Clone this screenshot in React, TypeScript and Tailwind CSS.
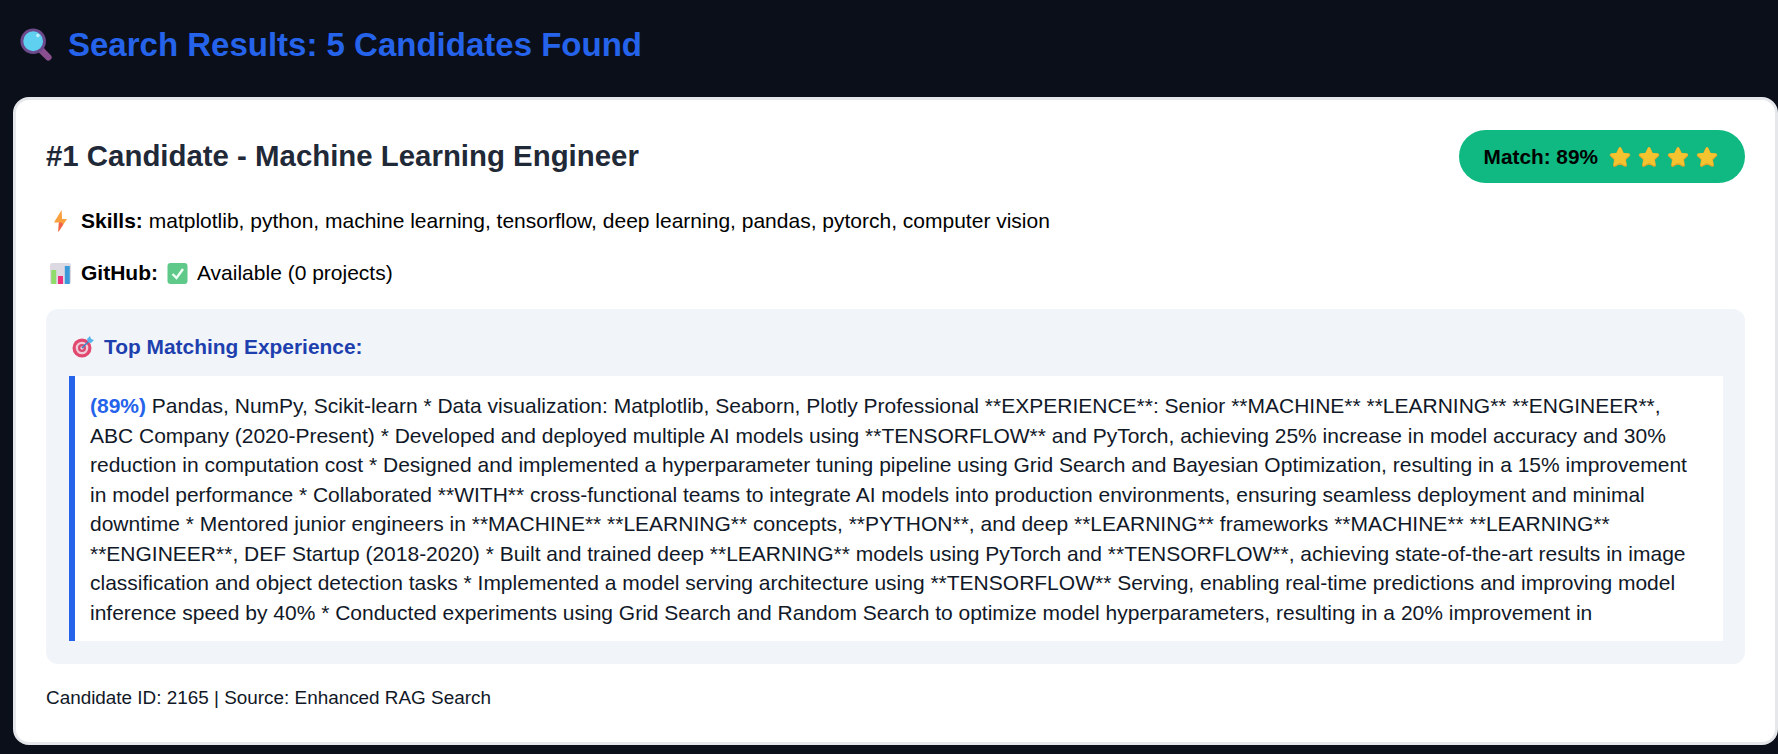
const font = "[font-family:'Liberation_Sans',Arial,sans-serif]";

function MagnifierIcon() {
  return (
    <svg width="34" height="34" viewBox="0 0 36 36" className="shrink-0">
      <path d="M24 24 L31 31" stroke="#8a4f8f" strokeWidth="7" strokeLinecap="round" />
      <circle cx="15" cy="14" r="12" fill="#5fd0f0" stroke="#6d4a8c" strokeWidth="3" />
      <circle cx="20" cy="8" r="1.8" fill="#c5effa" />
    </svg>
  );
}

function BoltIcon() {
  return (
    <svg width="13" height="22" viewBox="1 0 12 22" preserveAspectRatio="none" className="shrink-0">
      <path d="M8 0 L1 12.5 H5.5 L5 22 L13 9 H8.5 Z" fill="#f9a03f" />
      <path d="M5.5 12.5 L5 22 L9.5 14.5 L8 12.5 Z" fill="#f0624d" />
    </svg>
  );
}

function ChartIcon() {
  return (
    <svg width="21" height="21" viewBox="0 0 17 21" preserveAspectRatio="none" className="shrink-0">
      <rect width="17" height="21" rx="2" fill="#dcd9e3" />
      <rect x="1" y="7" width="4" height="14" fill="#8fdc6a" />
      <rect x="6.5" y="13" width="4" height="8" fill="#ee2f7c" />
      <rect x="12" y="3" width="4" height="18" fill="#3a9ad9" />
    </svg>
  );
}

function CheckIcon() {
  return (
    <svg width="21" height="21" viewBox="0 0 20 21" className="shrink-0">
      <rect x="0" y="0" width="20" height="21" rx="3" fill="#5fc98a" />
      <path d="M5 11 L9 15 L15.5 6" fill="none" stroke="#f2fff6" strokeWidth="2.4" />
    </svg>
  );
}

function TargetIcon() {
  return (
    <svg width="22" height="22" viewBox="0 0 22 22" className="shrink-0">
      <circle cx="10" cy="12" r="9.5" fill="#e2476f" />
      <circle cx="10" cy="12" r="6.3" fill="#f0cad6" />
      <circle cx="10" cy="12" r="4" fill="#d94a72" />
      <circle cx="10" cy="12" r="1.7" fill="#f0cad6" />
      <path d="M10 12 L19 3" stroke="#3e82c4" strokeWidth="1.6" />
      <path d="M15 3 L18 0 L19 3 L22 4 L19 7 L16 6 Z" fill="#56b4ea" />
    </svg>
  );
}

function StarIcon() {
  return (
    <svg width="22" height="22" viewBox="0 0 24 24" className="shrink-0">
      <path
        d="M12 3 L14.9 9 L21.5 9.9 L16.7 14.5 L17.9 21 L12 17.9 L6.1 21 L7.3 14.5 L2.5 9.9 L9.1 9 Z"
        fill="#e0a42a"
        stroke="#e0a42a"
        strokeWidth="3.4"
        strokeLinejoin="round"
      />
      <path
        d="M12 3 L14.9 9 L21.5 9.9 L16.7 14.5 L17.9 21 L12 17.9 L6.1 21 L7.3 14.5 L2.5 9.9 L9.1 9 Z"
        fill="#f4c430"
        stroke="#f4c430"
        strokeWidth="2"
        strokeLinejoin="round"
        transform="translate(0 -0.6)"
      />
    </svg>
  );
}

export default function App() {
  return (
    <div className={`${font} min-h-[754px] bg-[#0b0f19] pt-[24px] pb-[8px] pl-[13px] overflow-hidden`}>
      <h2 className="flex items-center gap-[15px] pl-[6px] h-[42px] text-[33px] font-bold leading-[42px] text-[#2563eb]">
        <MagnifierIcon />
        <span>Search Results: 5 Candidates Found</span>
      </h2>

      <div className="mt-[31px] rounded-[16px] border-[3px] border-[#e5e7eb] bg-white px-[30px] pt-[30px] pb-[32px]">
        <div className="flex items-center justify-between h-[53px]">
          <h3 className="text-[29.4px] font-bold text-[#1f2937]">#1 Candidate - Machine Learning Engineer</h3>
          <div className="flex items-center gap-[11px] h-[53px] rounded-full bg-[#10b981] pl-[25px] pr-[27px] text-[20.8px] font-bold text-black">
            <span>Match: 89%</span>
            <span className="flex items-center gap-[7px]">
              <StarIcon />
              <StarIcon />
              <StarIcon />
              <StarIcon />
            </span>
          </div>
        </div>

        <p className="mt-[23px] flex items-center gap-[14px] pl-[8px] h-[30px] text-[21px] text-black">
          <BoltIcon />
          <span>
            <b>Skills:</b> matplotlib, python, machine learning, tensorflow, deep learning, pandas, pytorch, computer vision
          </span>
        </p>

        <p className="mt-[22px] flex items-center pl-[4px] h-[30px] text-[21px] text-black">
          <ChartIcon />
          <b className="ml-[10px]">GitHub:</b>
          <span className="ml-[9px]">
            <CheckIcon />
          </span>
          <span className="ml-[9px]">Available (0 projects)</span>
        </p>

        <div className="mt-[21px] rounded-[12px] bg-[#f1f5f9] pt-[23px] pb-[23px] pl-[23px] pr-[22px]">
          <h4 className="flex items-center gap-[10px] pl-[3px] h-[30px] text-[20.9px] font-bold text-[#1e40af]">
            <TargetIcon />
            <span>Top Matching Experience:</span>
          </h4>
          <div className="mt-[14px] border-l-[6px] border-[#2563eb] bg-white pt-[15px] pb-[14px] pl-[15px] pr-[22px] text-[21px] leading-[29.5px] text-[#111827]">
            <b className="text-[#2563eb]">(89%)</b> Pandas, NumPy, Scikit-learn * Data visualization: Matplotlib, Seaborn, Plotly Professional **EXPERIENCE**: Senior **MACHINE** **LEARNING** **ENGINEER**, ABC Company (2020-Present) * Developed and deployed multiple AI models using **TENSORFLOW** and PyTorch, achieving 25% increase in model accuracy and 30% reduction in computation cost * Designed and implemented a hyperparameter tuning pipeline using Grid Search and Bayesian Optimization, resulting in a 15% improvement in model performance * Collaborated **WITH** cross-functional teams to integrate AI models into production environments, ensuring seamless deployment and minimal downtime * Mentored junior engineers in **MACHINE** **LEARNING** concepts, **PYTHON**, and deep **LEARNING** frameworks **MACHINE** **LEARNING** **ENGINEER**, DEF Startup (2018-2020) * Built and trained deep **LEARNING** models using PyTorch and **TENSORFLOW**, achieving state-of-the-art results in image classification and object detection tasks * Implemented a model serving architecture using **TENSORFLOW** Serving, enabling real-time predictions and improving model inference speed by 40% * Conducted experiments using Grid Search and Random Search to optimize model hyperparameters, resulting in a 20% improvement in
          </div>
        </div>

        <p className="mt-[22px] text-[18.9px] leading-[24px] text-[#111827]">Candidate ID: 2165 | Source: Enhanced RAG Search</p>
      </div>
    </div>
  );
}
